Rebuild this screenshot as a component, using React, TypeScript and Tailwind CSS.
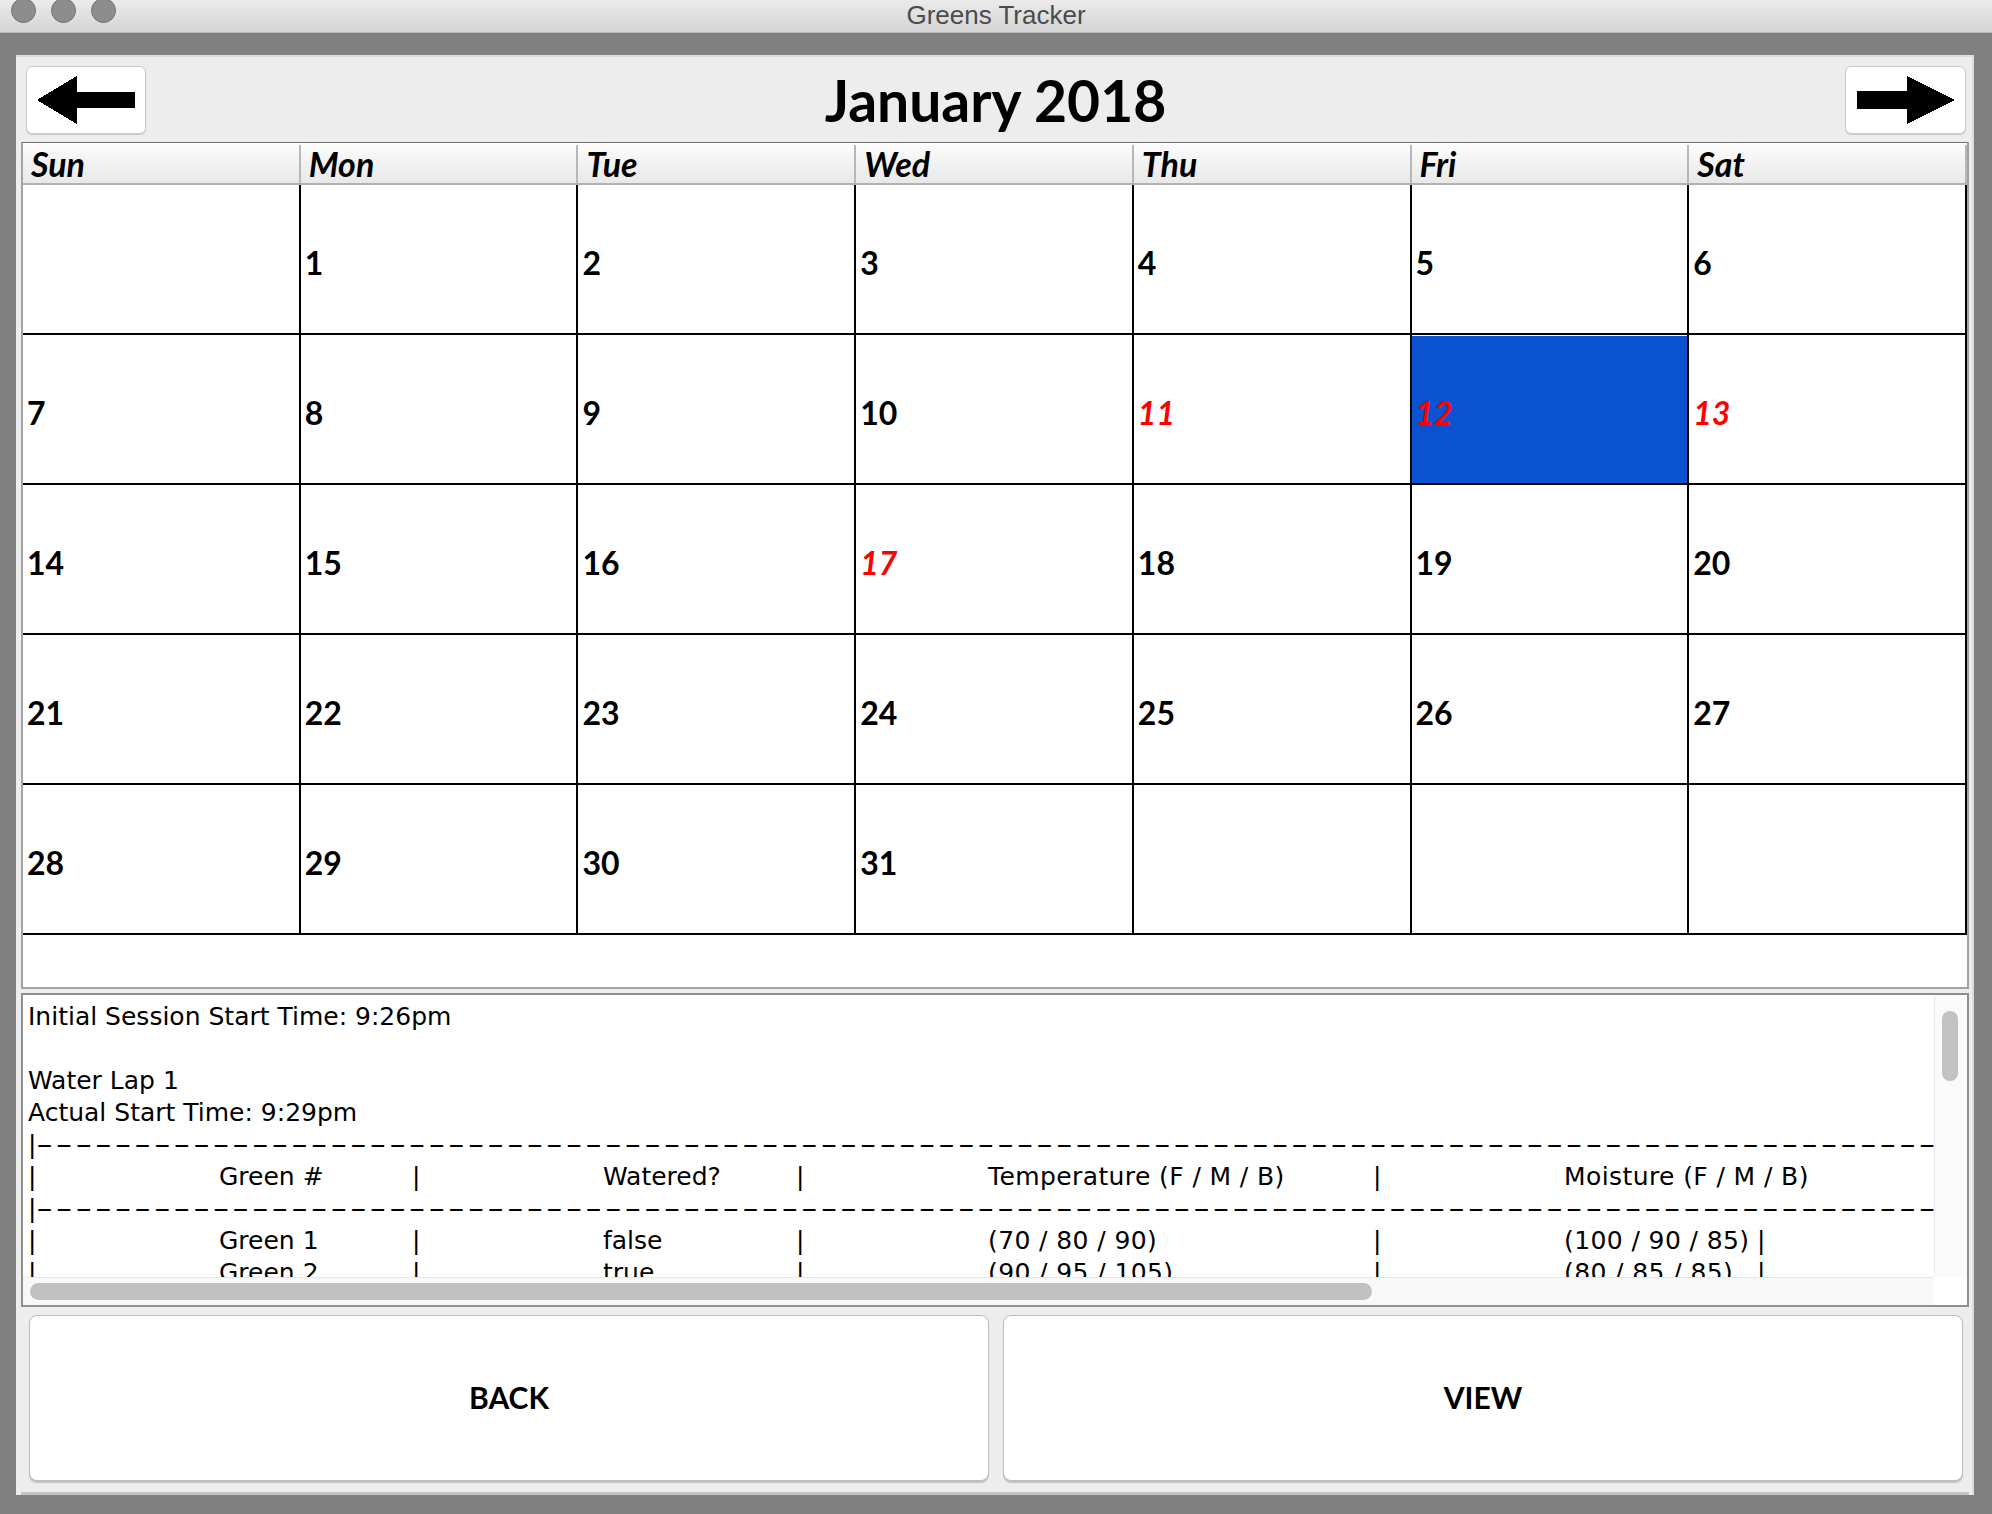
const WEEK = ['Sun', 'Mon', 'Tue', 'Wed', 'Thu', 'Fri', 'Sat']
const RED = [11, 12, 13, 17]
const SELECTED = 12

const cells: (number | null)[] = [null, ...Array.from({ length: 31 }, (_, i) => i + 1), null, null, null]

const DASHES = '-'.repeat(110)

type Row = { cols: string[]; end?: boolean }

const TABLE_ROWS: Row[] = [
  { cols: ['Green #', 'Watered?', 'Temperature (F / M / B)', 'Moisture (F / M / B)'] },
  { cols: ['Green 1', 'false', '(70 / 80 / 90)', '(100 / 90 / 85)'], end: true },
  { cols: ['Green 2', 'true', '(90 / 95 / 105)', '(80 / 85 / 85)'], end: true },
]

function LeftArrow() {
  return (
    <svg width="98" height="48" viewBox="0 0 98 48" shapeRendering="crispEdges">
      <polygon points="0,24 40,0 40,16 98,16 98,32 40,32 40,48" fill="#000" />
    </svg>
  )
}

function RightArrow() {
  return (
    <svg width="98" height="48" viewBox="0 0 98 48" shapeRendering="crispEdges">
      <polygon points="0,15 50,15 50,0 98,24 50,48 50,33 0,33" fill="#000" />
    </svg>
  )
}

function DashLine() {
  return (
    <div className="h-[32px] flex whitespace-nowrap">
      <span>|</span>
      <span className="inline-block origin-left scale-x-[1.9] tracking-[1.3px]">{DASHES}</span>
    </div>
  )
}

// column stops measured from the text's left edge
function TableRow({ row }: { row: Row }) {
  return (
    <div className="h-[32px] flex whitespace-nowrap">
      <span className="w-[191px] shrink-0">|</span>
      <span className="w-[193px] shrink-0">{row.cols[0]}</span>
      <span className="w-[191px] shrink-0">|</span>
      <span className="w-[193px] shrink-0">{row.cols[1]}</span>
      <span className="w-[192px] shrink-0">|</span>
      <span className="w-[385px] shrink-0 tracking-[0.4px]">{row.cols[2]}</span>
      <span className="w-[191px] shrink-0">|</span>
      <span className="w-[193px] shrink-0 tracking-[0.4px]">{row.cols[3]}</span>
      {row.end && <span className="shrink-0">|</span>}
    </div>
  )
}

export default function App() {
  return (
    <div className="w-[1992px] h-[1514px] bg-[#808080] flex flex-col font-['Lato',sans-serif] text-black overflow-hidden">
      {/* window title bar */}
      <div className="h-[33px] shrink-0 grid grid-cols-[1fr_auto_1fr] bg-linear-to-b from-[#ebebeb] to-[#d4d4d4] border-b border-[#b9b9b9]">
        <div className="flex gap-[15px] pl-[11px] -mt-[2px]">
          <div className="w-[25px] h-[25px] rounded-full bg-[#8d8d8d] border border-[#737373]" />
          <div className="w-[25px] h-[25px] rounded-full bg-[#8d8d8d] border border-[#737373]" />
          <div className="w-[25px] h-[25px] rounded-full bg-[#8d8d8d] border border-[#737373]" />
        </div>
        <div className="font-['Liberation_Sans',sans-serif] text-[26px] leading-[30px] text-[#4b4b4b]">Greens Tracker</div>
        <div />
      </div>

      <div className="flex-1 pt-[22px] pl-[16px] pr-[18px] pb-[19px]">
        <div className="h-full bg-[#ededed] border-t-2 border-r-2 border-[#dcdcdc] flex flex-col pl-[5px] pr-[3px]">
          {/* month header */}
          <div className="h-[85px] shrink-0 grid grid-cols-[auto_1fr_auto] items-start pt-[9px] pl-[5px] pr-[3px]">
            <button className="w-[120px] h-[68px] bg-white border border-[#c9c9c9] rounded-[6px] shadow-[0_1px_1px_rgba(0,0,0,0.15)] flex items-center justify-center">
              <LeftArrow />
            </button>
            <div className="text-center text-[57px] font-bold leading-[66px] mt-[1px]">January 2018</div>
            <button className="w-[121px] h-[68px] bg-white border border-[#c9c9c9] rounded-[6px] shadow-[0_1px_1px_rgba(0,0,0,0.15)] flex items-center justify-center">
              <RightArrow />
            </button>
          </div>

          {/* calendar */}
          <div className="h-[847px] shrink-0 flex flex-col border-t border-[#6f6f6f] border-x-2 border-x-[#a3a3a3] border-b-2 border-b-[#a3a3a3] bg-white">
            <div className="h-[42px] shrink-0 grid grid-cols-7 bg-linear-to-b from-[#fbfbfb] to-[#e8e8e8] border-b-2 border-[#b2b2b2] border-t-2 border-t-white">
              {WEEK.map((d) => (
                <div key={d} className="border-r-2 border-[#b7b7b7] pl-[8px] flex items-center text-[34px] font-bold italic leading-[36px]">
                  {d}
                </div>
              ))}
            </div>
            <div className="grid grid-cols-7 grid-rows-[repeat(5,150px)]">
              {cells.map((n, i) => {
                const red = n !== null && RED.includes(n)
                const sel = n === SELECTED
                return (
                  <div
                    key={i}
                    className={`border-r-2 border-b-2 border-black pl-[4px] pt-[8px] flex items-center text-[32px] font-bold leading-[38px] ${
                      sel ? 'bg-[#0b52d1] shadow-[inset_0_1px_0_#ffffff]' : ''
                    } ${red ? 'text-[#ff0000] italic' : ''}`}
                  >
                    {n ?? ''}
                  </div>
                )
              })}
            </div>
            <div className="flex-1" />
          </div>

          <div className="h-[4px] shrink-0" />

          {/* session log */}
          <div className="h-[314px] shrink-0 border-2 border-[#8f8f8f] bg-white flex flex-col">
            <div className="flex-1 flex min-h-0">
              <div className="flex-1 overflow-hidden pl-[5px] pt-[6px] font-['DejaVu_Sans',sans-serif] text-[25px] leading-[32px]">
                <div className="h-[32px]">Initial Session Start Time: 9:26pm</div>
                <div className="h-[32px]" />
                <div className="h-[32px]">Water Lap 1</div>
                <div className="h-[32px]">Actual Start Time: 9:29pm</div>
                <DashLine />
                <TableRow row={TABLE_ROWS[0]} />
                <DashLine />
                <TableRow row={TABLE_ROWS[1]} />
                <TableRow row={TABLE_ROWS[2]} />
              </div>
              <div className="w-[33px] shrink-0 bg-[#fafafa] border-l border-[#ececec] pl-[7px] pt-[16px]">
                <div className="w-[16px] h-[70px] rounded-full bg-[#c2c2c2]" />
              </div>
            </div>
            <div className="h-[28px] shrink-0 flex">
              <div className="flex-1 bg-[#f8f8f8] border-t border-[#e6e6e6] flex items-center pl-[7px]">
                <div className="w-[1342px] h-[17px] rounded-full bg-[#c1c1c1]" />
              </div>
              <div className="w-[33px] bg-white" />
            </div>
          </div>

          {/* actions */}
          <div className="flex-1 flex flex-col pt-[8px]">
            <div className="h-[166px] flex gap-[14px] pl-[8px] pr-[6px]">
              <button className="flex-1 bg-white border border-[#bcbcbc] rounded-[8px] shadow-[0_2px_1px_rgba(0,0,0,0.18)] text-[30px] font-bold pb-[2px]">BACK</button>
              <button className="flex-1 bg-white border border-[#bcbcbc] rounded-[8px] shadow-[0_2px_1px_rgba(0,0,0,0.18)] text-[30px] font-bold pb-[2px]">VIEW</button>
            </div>
            <div className="flex-1 border-b-[3px] border-[#c4c4c4]" />
          </div>
        </div>
      </div>
    </div>
  )
}
